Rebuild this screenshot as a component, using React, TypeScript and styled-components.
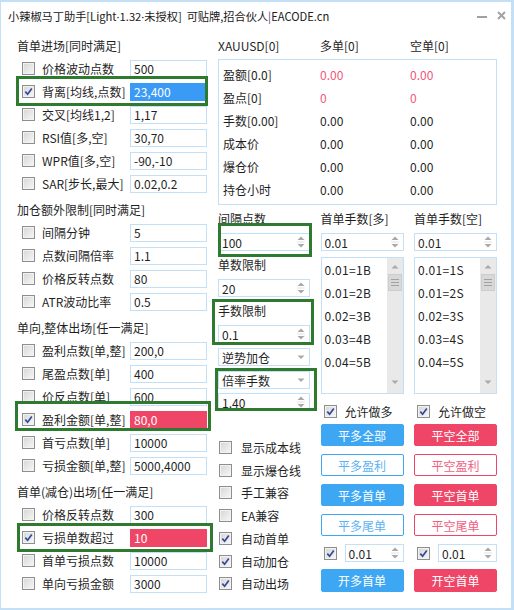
import React from 'react';
import styled, { createGlobalStyle } from 'styled-components';

const BLUE = '#3ea7f4';
const RED = '#ef4668';
const FRAME = '#c4e0f6';
const INPUT_BORDER = '#c3e0f7';
const GREEN = '#2e7b30';

const GlobalStyle = createGlobalStyle`
  html, body { margin: 0; padding: 0; background: #fff; }
  body {
    font-family: "Noto Sans CJK SC", "Noto Sans", sans-serif;
    font-size: 12px;
    color: #1f1f1f;
  }
  *, *::before, *::after { box-sizing: border-box; }
`;

const Window = styled.div`
  position: relative;
  width: 514px;
  height: 610px;
  background: #fff;
  border-style: solid;
  border-color: ${FRAME};
  border-width: 2px 3px 2px 1px;
  overflow: hidden;
`;

const TitleBar = styled.div`
  display: flex;
  align-items: center;
  height: 27px;
  padding-left: 7px;
  padding-right: 5px;
`;

const Title = styled.div`
  flex: 1;
  font-size: 11.2px;
  white-space: pre;
  color: #202020;
`;

const Pipe = styled.span`
  color: #6b2a8c;
`;

const Dot = styled.span`
  font-family: "Noto Sans", sans-serif;
`;

const WinButtons = styled.div`
  display: flex;
  align-items: center;
  gap: 10px;
`;

const Body = styled.div`
  display: flex;
  gap: 11px;
  padding: 5px 0 0 16px;
`;

const LeftCol = styled.div`
  width: 190px;
  display: flex;
  flex-direction: column;
`;

const Section = styled.div`
  display: flex;
  flex-direction: column;
  & + & {
    margin-top: 3px;
  }
`;

const SectionTitle = styled.div`
  height: 23px;
  display: flex;
  align-items: center;
`;

const Row = styled.div`
  height: 23px;
  display: flex;
  align-items: center;
  padding-left: 5px;
`;

const RowLabel = styled.span`
  flex: 1;
  margin-left: 7px;
  white-space: nowrap;
`;

type Hl = 'blue' | 'red' | undefined;

const ValueBox = styled.div<{ $hl?: Hl }>`
  flex: none;
  width: 77px;
  height: 18px;
  display: flex;
  align-items: center;
  padding-left: 3px;
  border: 1px solid
    ${(p) => (p.$hl === 'blue' ? '#3a9bf6' : p.$hl === 'red' ? RED : INPUT_BORDER)};
  background: ${(p) => (p.$hl === 'blue' ? '#3a9bf6' : p.$hl === 'red' ? RED : '#fff')};
  color: ${(p) => (p.$hl ? '#fff' : '#1f1f1f')};
  white-space: nowrap;
`;

const RightCol = styled.div`
  width: 279px;
  display: flex;
  flex-direction: column;
`;

const StatsHeader = styled.div`
  display: grid;
  grid-template-columns: 102px 90px 1fr;
  height: 23px;
  align-items: center;
`;

const StatsBox = styled.div`
  margin-top: 2px;
  border: 1px solid ${FRAME};
  padding: 3px 0 3px 4px;
`;

const StatRow = styled.div`
  display: grid;
  grid-template-columns: 97px 90px 1fr;
  height: 23px;
  align-items: center;
`;

const StatValue = styled.span<{ $red?: boolean }>`
  color: ${(p) => (p.$red ? '#f2557d' : '#1f1f1f')};
`;

const Lower = styled.div`
  margin-top: 2px;
  display: grid;
  grid-template-columns: 92px 83px 83px;
  justify-content: space-between;
`;

const Col = styled.div`
  display: flex;
  flex-direction: column;
`;

const ColLabel = styled.div<{ $mt?: number }>`
  height: 23px;
  display: flex;
  align-items: center;
  margin-top: ${(p) => p.$mt ?? 0}px;
  white-space: nowrap;
`;

const Field = styled.div<{ $mt?: number; $w?: number }>`
  flex: none;
  height: 18px;
  width: ${(p) => (p.$w ? `${p.$w}px` : '100%')};
  margin-top: ${(p) => p.$mt ?? 0}px;
  border: 1px solid ${INPUT_BORDER};
  display: flex;
  align-items: center;
  justify-content: space-between;
  padding: 0 4px 0 3px;
  background: #fff;
  white-space: nowrap;
`;

const ListBox = styled.div`
  margin-top: 6px;
  height: 137px;
  border: 1px solid ${INPUT_BORDER};
  display: flex;
`;

const ListItems = styled.div`
  flex: 1;
  display: flex;
  flex-direction: column;
  padding-left: 3px;
`;

const ListItem = styled.div`
  height: 23px;
  display: flex;
  align-items: center;
  letter-spacing: 0.3px;
`;

const ScrollBar = styled.div`
  width: 16px;
  background: #e9e9e9;
  display: flex;
  flex-direction: column;
  align-items: center;
`;

const ScrollArrow = styled.div<{ $down?: boolean }>`
  height: 16px;
  width: 16px;
  display: flex;
  align-items: center;
  justify-content: center;
  margin-top: ${(p) => (p.$down ? 'auto' : '0')};
  margin-bottom: ${(p) => (p.$down ? '3px' : '0')};
`;

const Thumb = styled.div`
  width: 14px;
  height: 17px;
  background: #d8d8d8;
  border: 1px solid #cdcdcd;
  display: flex;
  flex-direction: column;
  align-items: center;
  justify-content: center;
  gap: 2px;
  span {
    display: block;
    width: 8px;
    height: 1px;
    background: #a2a2a2;
  }
`;

const CheckRow = styled.div<{ $mt?: number; $h?: number; $gap?: number; $pl?: number }>`
  display: flex;
  align-items: center;
  height: ${(p) => p.$h ?? 23}px;
  margin-top: ${(p) => p.$mt ?? 0}px;
  gap: ${(p) => p.$gap ?? 8}px;
  padding-left: ${(p) => p.$pl ?? 3}px;
  white-space: nowrap;
`;

const CheckList = styled.div`
  margin-top: 25px;
  display: flex;
  flex-direction: column;
`;

const Box = styled.span`
  flex: none;
  width: 13px;
  height: 13px;
  border: 1px solid #8e8e8e;
  background: linear-gradient(135deg, #d6d6d6 0%, #f7f7f7 100%);
  box-shadow: inset 0 0 0 1px #f2f2f2;
  display: flex;
  align-items: center;
  justify-content: center;
`;

const Button = styled.div<{ $mt?: number; $h?: number; $tone: 'blue' | 'red'; $outline?: boolean }>`
  margin-top: ${(p) => p.$mt ?? 0}px;
  height: ${(p) => p.$h ?? 22}px;
  border-radius: 2px;
  display: flex;
  align-items: center;
  justify-content: center;
  font-size: 12px;
  border: 1px solid ${(p) => (p.$tone === 'blue' ? BLUE : RED)};
  background: ${(p) => (p.$outline ? '#fff' : p.$tone === 'blue' ? BLUE : RED)};
  color: ${(p) => (p.$outline ? (p.$tone === 'blue' ? '#5cb2f2' : '#f0607f') : '#fff')};
`;

const Highlight = styled.div<{ $x: number; $y: number; $w: number; $h: number }>`
  position: absolute;
  left: ${(p) => p.$x - 1}px;
  top: ${(p) => p.$y - 2}px;
  width: ${(p) => p.$w}px;
  height: ${(p) => p.$h}px;
  border: 3px solid ${GREEN};
  pointer-events: none;
`;

const Check = ({ on }: { on?: boolean }) => (
  <Box>
    {on && (
      <svg width="9" height="9" viewBox="0 0 9 9">
        <path d="M1.3 4.6 L3.6 7.2 L7.8 1.4" fill="none" stroke="#34489a" strokeWidth="1.7" />
      </svg>
    )}
  </Box>
);

const SpinArrows = () => (
  <svg width="8" height="14" viewBox="0 0 8 14">
    <path d="M0.5 5 L4 1.5 L7.5 5 Z" fill="#a9a9a9" />
    <line x1="0" y1="7" x2="8" y2="7" stroke="#e2e2e2" strokeWidth="1" />
    <path d="M0.5 9 L4 12.5 L7.5 9 Z" fill="#a9a9a9" />
  </svg>
);

const DropArrow = () => (
  <svg width="8" height="6" viewBox="0 0 8 6">
    <path d="M0.5 1.5 L4 5 L7.5 1.5 Z" fill="#a9a9a9" />
  </svg>
);

const Spin = ({ value, mt, w }: { value: string; mt?: number; w?: number }) => (
  <Field $mt={mt} $w={w}>
    <span>{value}</span>
    <SpinArrows />
  </Field>
);

const Select = ({ value, mt }: { value: string; mt?: number }) => (
  <Field $mt={mt}>
    <span>{value}</span>
    <DropArrow />
  </Field>
);

const List = ({ items }: { items: string[] }) => (
  <ListBox>
    <ListItems>
      {items.map((t) => (
        <ListItem key={t}>{t}</ListItem>
      ))}
    </ListItems>
    <ScrollBar>
      <ScrollArrow>
        <svg width="8" height="5" viewBox="0 0 8 5">
          <path d="M0.5 4.5 L4 1 L7.5 4.5 Z" fill="#a9a9a9" />
        </svg>
      </ScrollArrow>
      <Thumb>
        <span />
        <span />
        <span />
      </Thumb>
      <ScrollArrow $down>
        <svg width="8" height="5" viewBox="0 0 8 5">
          <path d="M0.5 0.5 L4 4 L7.5 0.5 Z" fill="#a9a9a9" />
        </svg>
      </ScrollArrow>
    </ScrollBar>
  </ListBox>
);

type RowDef = { label: string; value: string; checked?: boolean; hl?: Hl };

const sections: { title: string; rows: RowDef[] }[] = [
  {
    title: '首单进场[同时满足]',
    rows: [
      { label: '价格波动点数', value: '500' },
      { label: '背离[均线,点数]', value: '23,400', checked: true, hl: 'blue' },
      { label: '交叉[均线1,2]', value: '1,17' },
      { label: 'RSI值[多,空]', value: '30,70' },
      { label: 'WPR值[多,空]', value: '-90,-10' },
      { label: 'SAR[步长,最大]', value: '0.02,0.2' },
    ],
  },
  {
    title: '加仓额外限制[同时满足]',
    rows: [
      { label: '间隔分钟', value: '5' },
      { label: '点数间隔倍率', value: '1.1' },
      { label: '价格反转点数', value: '80' },
      { label: 'ATR波动比率', value: '0.5' },
    ],
  },
  {
    title: '单向,整体出场[任一满足]',
    rows: [
      { label: '盈利点数[单,整]', value: '200,0' },
      { label: '尾盈点数[单]', value: '400' },
      { label: '价反点数[单]', value: '600' },
      { label: '盈利金额[单,整]', value: '80,0', checked: true, hl: 'red' },
      { label: '首亏点数[单]', value: '10000' },
      { label: '亏损金额[单,整]', value: '5000,4000' },
    ],
  },
  {
    title: '首单(减仓)出场[任一满足]',
    rows: [
      { label: '价格反转点数', value: '300' },
      { label: '亏损单数超过', value: '10', checked: true, hl: 'red' },
      { label: '首单亏损点数', value: '10000' },
      { label: '单向亏损金额', value: '3000' },
    ],
  },
];

const stats = [
  { label: '盈额[0.0]', a: '0.00', b: '0.00', red: true },
  { label: '盈点[0]', a: '0', b: '0', red: true },
  { label: '手数[0.00]', a: '0.00', b: '0.00' },
  { label: '成本价', a: '0.00', b: '0.00' },
  { label: '爆仓价', a: '0.00', b: '0.00' },
  { label: '持仓小时', a: '0.00', b: '0.00' },
];

const options = [
  { label: '显示成本线', on: false },
  { label: '显示爆仓线', on: false },
  { label: '手工兼容', on: false },
  { label: 'EA兼容', on: false },
  { label: '自动首单', on: true },
  { label: '自动加仓', on: true },
  { label: '自动出场', on: true },
];

const SideCol = ({ side }: { side: 'long' | 'short' }) => {
  const isLong = side === 'long';
  const tone = isLong ? 'blue' : 'red';
  const c = isLong ? '多' : '空';
  const suffix = isLong ? 'B' : 'S';
  const items = ['0.01=1', '0.01=2', '0.02=3', '0.03=4', '0.04=5'].map((x) => x + suffix);
  return (
    <Col>
      <ColLabel>{`首单手数[${c}]`}</ColLabel>
      <Spin value="0.01" mt={3} />
      <List items={items} />
      <CheckRow $mt={6} $h={22}>
        <Check on />
        <span>{`允许做${c}`}</span>
      </CheckRow>
      <Button $mt={2} $tone={tone}>{`平${c}全部`}</Button>
      <Button $mt={8} $tone={tone} $outline>{`平${c}盈利`}</Button>
      <Button $mt={8} $tone={tone}>{`平${c}首单`}</Button>
      <Button $mt={8} $tone={tone} $outline>{`平${c}尾单`}</Button>
      <CheckRow $mt={8} $h={18}>
        <Check on />
        <Spin value="0.01" w={59} />
      </CheckRow>
      <Button $mt={7} $h={23} $tone={tone}>{`开${c}首单`}</Button>
    </Col>
  );
};

export default function App() {
  return (
    <>
      <GlobalStyle />
      <Window>
        <TitleBar>
          <Title>
            小辣椒马丁助手[Light<Dot>·</Dot>1.32<Dot>·</Dot>未授权]  可贴牌,招合伙人<Pipe>|</Pipe>EACODE.cn
          </Title>
          <WinButtons>
            <svg width="10" height="10" viewBox="0 0 10 10">
              <line x1="0" y1="6" x2="10" y2="6" stroke="#8a8a8a" strokeWidth="1.6" />
            </svg>
            <svg width="9" height="9" viewBox="0 0 9 9">
              <path d="M1 1 L8 8 M8 1 L1 8" stroke="#a3a3a3" strokeWidth="2" />
            </svg>
          </WinButtons>
        </TitleBar>
        <Body>
          <LeftCol>
            {sections.map((s) => (
              <Section key={s.title}>
                <SectionTitle>{s.title}</SectionTitle>
                {s.rows.map((r) => (
                  <Row key={r.label + r.value}>
                    <Check on={r.checked} />
                    <RowLabel>{r.label}</RowLabel>
                    <ValueBox $hl={r.hl}>{r.value}</ValueBox>
                  </Row>
                ))}
              </Section>
            ))}
          </LeftCol>
          <RightCol>
            <StatsHeader>
              <span>XAUUSD[0]</span>
              <span>多单[0]</span>
              <span>空单[0]</span>
            </StatsHeader>
            <StatsBox>
              {stats.map((s) => (
                <StatRow key={s.label}>
                  <span>{s.label}</span>
                  <StatValue $red={s.red}>{s.a}</StatValue>
                  <StatValue $red={s.red}>{s.b}</StatValue>
                </StatRow>
              ))}
            </StatsBox>
            <Lower>
              <Col>
                <ColLabel>间隔点数</ColLabel>
                <Spin value="100" mt={3} />
                <ColLabel $mt={2}>单数限制</ColLabel>
                <Spin value="20" mt={3} />
                <ColLabel $mt={2}>手数限制</ColLabel>
                <Spin value="0.1" mt={3} />
                <Select value="逆势加仓" mt={5} />
                <Select value="倍率手数" mt={5} />
                <Spin value="1.40" mt={4} />
                <CheckList>
                  {options.map((o) => (
                    <CheckRow key={o.label} $h={22.75} $gap={9} $pl={1}>
                      <Check on={o.on} />
                      <span>{o.label}</span>
                    </CheckRow>
                  ))}
                </CheckList>
              </Col>
              <SideCol side="long" />
              <SideCol side="short" />
            </Lower>
          </RightCol>
        </Body>
        <Highlight $x={16} $y={76} $w={192} $h={30} />
        <Highlight $x={15} $y={401} $w={196} $h={30} />
        <Highlight $x={17} $y={523} $w={196} $h={29} />
        <Highlight $x={218} $y={223} $w={94} $h={34} />
        <Highlight $x={212} $y={299} $w={102} $h={46} />
        <Highlight $x={215} $y={368} $w={102} $h={43} />
      </Window>
    </>
  );
}
